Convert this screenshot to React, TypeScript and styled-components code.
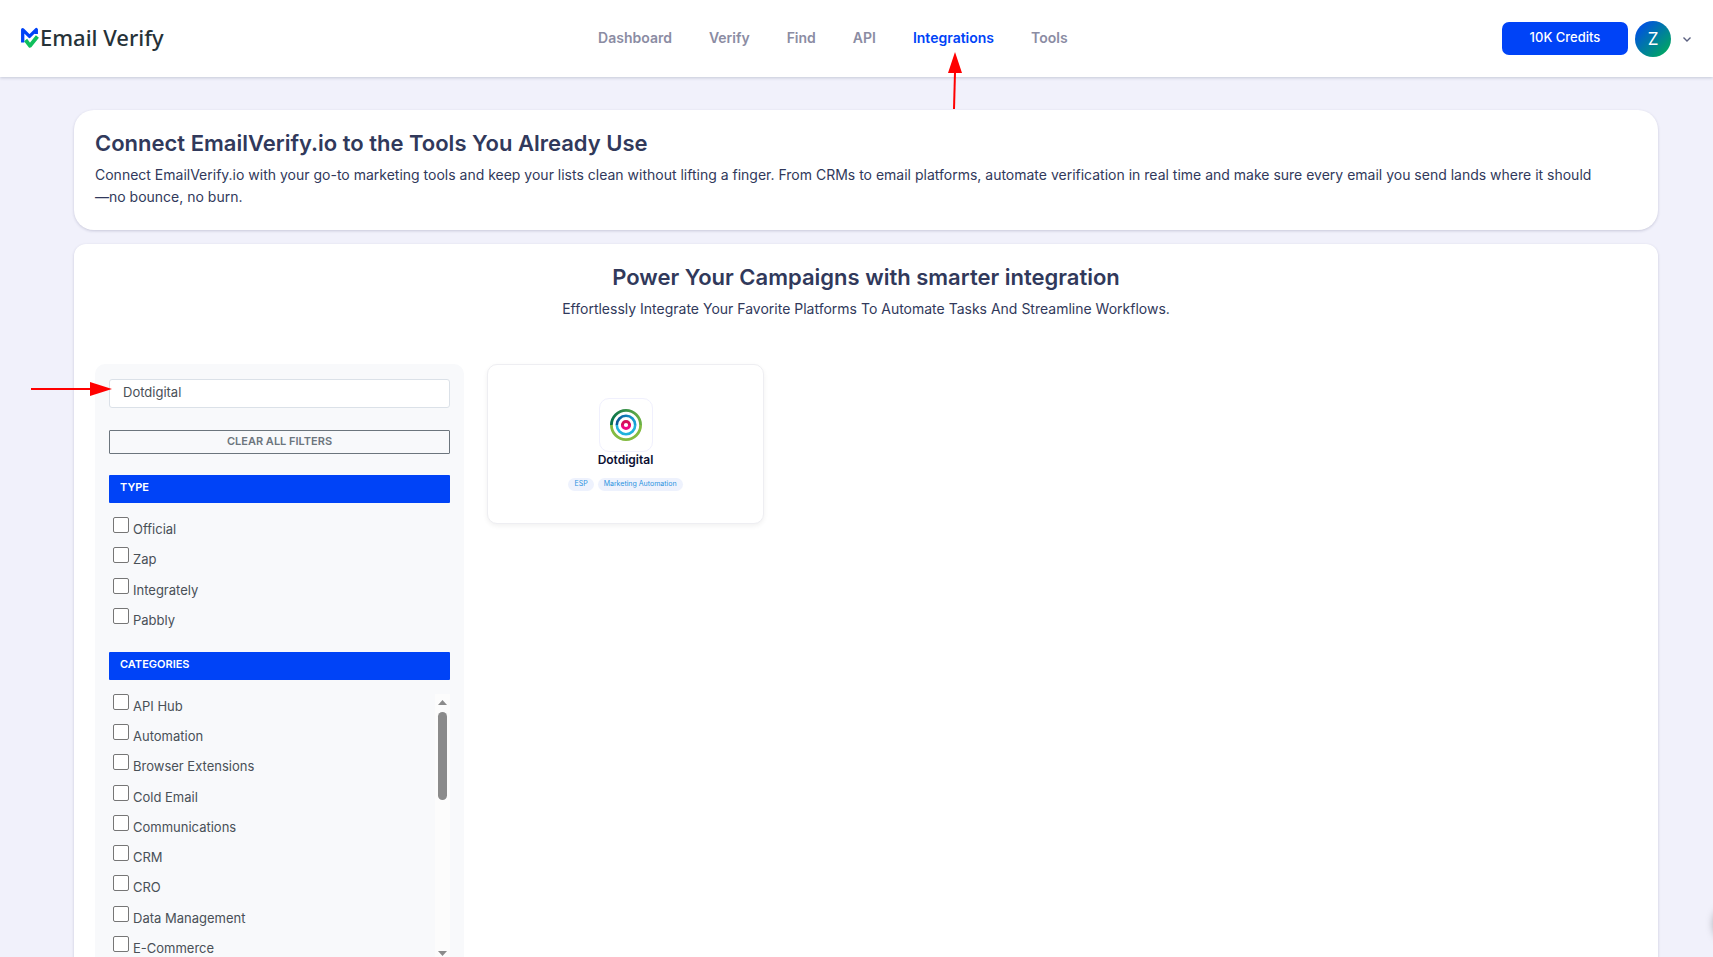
import React, { useState } from "react";
import styled, { createGlobalStyle } from "styled-components";

const GlobalStyle = createGlobalStyle`
  *, *::before, *::after { box-sizing: border-box; }
  body {
    margin: 0;
    background: #f1f1fb;
    font-family: Inter, "Liberation Sans", sans-serif;
    color: #31395b;
  }
  button, input { font-family: inherit; }
  h1, h2, h3, p, ul { margin: 0; padding: 0; }
`;

const Shell = styled.div`
  position: relative;
  display: flex;
  flex-direction: column;
  height: 100vh;
  overflow: hidden;
`;

const Header = styled.header`
  display: flex;
  align-items: center;
  justify-content: space-between;
  flex: none;
  height: 77px;
  padding: 0 20px;
  background: #fff;
  box-shadow: 0 1px 3px rgba(40, 60, 90, 0.22);
  z-index: 1;
`;

const Brand = styled.a`
  display: flex;
  align-items: center;
  gap: 1px;
  padding-bottom: 2px;
  color: #263238;
  text-decoration: none;
`;

const BrandName = styled.span`
  padding-bottom: 2px;
  font-family: "Noto Sans", "Open Sans", sans-serif;
  font-size: 22px;
  font-weight: 500;
  line-height: 28px;
`;

const Nav = styled.nav`
  display: flex;
  gap: 37px;
  padding-bottom: 2px;
`;

const NavLink = styled.a<{ $active?: boolean }>`
  position: relative;
  font-size: 14px;
  font-weight: 600;
  line-height: 20px;
  text-decoration: none;
  color: ${(p) => (p.$active ? "#0043f7" : "#8b8ca3")};
`;

const Account = styled.div`
  display: flex;
  align-items: center;
  gap: 7px;
`;

const CreditsButton = styled.button`
  width: 126px;
  height: 33px;
  padding: 0 0 3px;
  border: 0;
  border-radius: 7px;
  background: #0043f7;
  color: #fff;
  font-size: 13px;
  font-weight: 500;
`;

const ProfileButton = styled.button`
  display: flex;
  align-items: center;
  gap: 10px;
  padding: 0;
  border: 0;
  background: none;
  color: #5b6180;
`;

const Avatar = styled.span`
  display: grid;
  place-items: center;
  width: 36px;
  height: 36px;
  border-radius: 50%;
  background: linear-gradient(135deg, #0043f7, #00b34f);
  color: #fff;
  font-size: 17px;
`;

const Main = styled.main`
  display: flex;
  flex-direction: column;
  flex: 1;
  gap: 14px;
  min-height: 0;
  padding: 33px 55px 0 74px;
  overflow-y: auto;
  scrollbar-width: none;
`;

const Panel = styled.section<{ $radius: number }>`
  flex: none;
  padding: 19px 21px 22px;
  border-radius: ${(p) => p.$radius}px;
  background: #fff;
  box-shadow: 0 1px 3px rgba(40, 40, 90, 0.2);
`;

const Title = styled.h1`
  font-size: 22px;
  font-weight: 600;
  line-height: 28px;
`;

const Lead = styled.p`
  margin-top: 7px;
  font-size: 14px;
  line-height: 22px;
`;

const Intro = styled.div`
  margin-bottom: 44px;
  text-align: center;
`;

const Columns = styled.div`
  display: flex;
  align-items: flex-start;
  gap: 23px;
`;

const Sidebar = styled.aside`
  display: flex;
  flex-direction: column;
  width: 369px;
  padding: 15px 14px;
  border-radius: 10px;
  background: #f8f9fb;
`;

const SearchBox = styled.div`
  position: relative;
`;

const SearchInput = styled.input`
  display: block;
  width: 100%;
  height: 29px;
  padding: 0 13px 3px;
  border: 1px solid #dbe1e8;
  border-radius: 3px;
  background: #fff;
  color: #495057;
  font-size: 13px;
  outline: none;
`;

const ClearButton = styled.button`
  height: 24px;
  margin: 22px 0 21px;
  padding: 0 0 2px;
  border: 1px solid #6c757d;
  border-radius: 1px;
  background: transparent;
  color: #6c757d;
  font-size: 11px;
  font-weight: 600;
`;

const GroupTitle = styled.h3`
  height: 28px;
  padding: 0 11px;
  border-radius: 1px;
  background: #0043f7;
  color: #fff;
  font-size: 11px;
  font-weight: 600;
  line-height: 25px;
`;

const GroupBody = styled.div`
  display: flex;
  margin: 10px 0 18px;
`;

const OptionList = styled.ul<{ $height: number }>`
  display: flex;
  flex-direction: column;
  flex: 1;
  height: ${(p) => p.$height}px;
  padding-left: 4px;
  list-style: none;
`;

const Option = styled.li`
  flex: 1;
`;

const OptionLabel = styled.label`
  display: flex;
  gap: 4px;
  padding-top: 4px;
  color: #495057;
  font-size: 13px;
  line-height: 24px;
`;

const CheckBox = styled.input`
  appearance: none;
  width: 16px;
  height: 16px;
  margin: 0;
  border: 1px solid #767676;
  border-radius: 2px;
  background: #fff;
  &:checked {
    background: #0043f7;
    box-shadow: inset 0 0 0 3px #fff;
  }
`;

const ScrollRail = styled.div`
  display: flex;
  flex-direction: column;
  align-items: center;
  width: 15px;
  height: 268px;
  margin-top: 4px;
  padding: 6px 0;
  background: #fcfcfc;
`;

const ScrollThumb = styled.div`
  width: 9px;
  height: 88px;
  margin: 7px 0 auto;
  border-radius: 5px;
  background: #8b8b8b;
`;

const IntegrationCard = styled.article`
  display: flex;
  flex-direction: column;
  align-items: center;
  width: 277px;
  height: 160px;
  padding-top: 33px;
  border: 1px solid #eeeef2;
  border-radius: 10px;
  background: #fff;
  box-shadow: 0 2px 5px rgba(0, 0, 0, 0.06);
`;

const LogoTile = styled.div`
  display: grid;
  place-items: center;
  width: 54px;
  height: 54px;
  border: 1px solid #f0f0fd;
  border-radius: 10px;
`;

const CardName = styled.h3`
  color: #0b0f33;
  font-size: 12px;
  font-weight: 600;
  line-height: 16px;
`;

const Tags = styled.div`
  display: flex;
  gap: 4px;
  margin-top: 10px;
`;

const Tag = styled.span`
  height: 13px;
  padding: 0 6px;
  border-radius: 7px;
  background: #eef2fd;
  color: #2b93e0;
  font-size: 7px;
  line-height: 11px;
`;

const UpArrow = styled.svg`
  position: absolute;
  top: 24px;
  left: 50%;
  width: 16px;
  height: 58px;
  margin-left: -6px;
  pointer-events: none;
`;

const RightArrow = styled.svg`
  position: absolute;
  top: 3px;
  right: 100%;
  width: 81px;
  height: 14px;
  margin-right: -3px;
  pointer-events: none;
`;

const ChatBubble = styled.div`
  position: absolute;
  right: -41px;
  bottom: 13px;
  width: 40px;
  height: 40px;
  border-radius: 50%;
  background: #fff;
  box-shadow: 0 0 8px rgba(0, 0, 0, 0.35);
`;

const navItems = ["Dashboard", "Verify", "Find", "API", "Integrations", "Tools"];
const types = ["Official", "Zap", "Integrately", "Pabbly"];
const categories = [
  "API Hub",
  "Automation",
  "Browser Extensions",
  "Cold Email",
  "Communications",
  "CRM",
  "CRO",
  "Data Management",
  "E-Commerce",
];

function BrandMark() {
  return (
    <svg width="19" height="24" viewBox="0 0 19 24" fill="none" aria-hidden="true">
      <path
        d="M2.7 16.5V3.6L9.5 10.4 16.3 3.6V8"
        stroke="#0043f7"
        strokeWidth="3.3"
        strokeLinejoin="round"
      />
      <path d="M5.6 14L10 19.8 17.4 10.5" stroke="#0fbf5c" strokeWidth="3.8" strokeLinejoin="round" />
    </svg>
  );
}

function DotdigitalLogo() {
  return (
    <svg width="32" height="32" viewBox="0 0 32 32" fill="none" aria-hidden="true">
      <defs>
        <linearGradient id="ring-green" x1="0" y1="0" x2="1" y2="0">
          <stop offset="0" stopColor="#08724a" />
          <stop offset="1" stopColor="#6ab045" />
        </linearGradient>
        <linearGradient id="ring-blue" x1="0" y1="0" x2="1" y2="0">
          <stop offset="0" stopColor="#0a5796" />
          <stop offset="1" stopColor="#17a0d6" />
        </linearGradient>
      </defs>
      <path d="M1.4 16a14.6 14.6 0 0 0 29.2 0" stroke="#83bb41" strokeWidth="2.8" />
      <path d="M1.4 16a14.6 14.6 0 0 1 29.2 0" stroke="url(#ring-green)" strokeWidth="2.8" />
      <path d="M6.8 16a9.2 9.2 0 0 0 18.4 0" stroke="#1fb2dc" strokeWidth="2.6" />
      <path d="M6.8 16a9.2 9.2 0 0 1 18.4 0" stroke="url(#ring-blue)" strokeWidth="2.6" />
      <path d="M12.4 16a3.6 3.6 0 0 0 7.2 0" stroke="#ec0a80" strokeWidth="3" />
      <path d="M12.4 16a3.6 3.6 0 0 1 7.2 0" stroke="#d6105a" strokeWidth="3" />
    </svg>
  );
}

function Options({ items, height }: { items: string[]; height: number }) {
  return (
    <OptionList $height={height}>
      {items.map((item) => (
        <Option key={item}>
          <OptionLabel>
            <CheckBox type="checkbox" />
            {item}
          </OptionLabel>
        </Option>
      ))}
    </OptionList>
  );
}

export default function App() {
  const [query, setQuery] = useState("Dotdigital");
  return (
    <Shell>
      <GlobalStyle />
      <Header>
        <Brand href="#">
          <BrandMark />
          <BrandName>Email Verify</BrandName>
        </Brand>
        <Nav>
          {navItems.map((item) => (
            <NavLink key={item} href="#" $active={item === "Integrations"}>
              {item}
              {item === "Integrations" && (
                <UpArrow viewBox="0 0 16 58" aria-hidden="true">
                  <path d="M8 20L7 57" stroke="#f00" strokeWidth="2" />
                  <path d="M8 0L15 21H1z" fill="#f00" />
                </UpArrow>
              )}
            </NavLink>
          ))}
        </Nav>
        <Account>
          <CreditsButton type="button">10K Credits</CreditsButton>
          <ProfileButton type="button" aria-label="Account menu">
            <Avatar>Z</Avatar>
            <svg width="12" height="12" viewBox="0 0 12 12" fill="none" aria-hidden="true">
              <path d="M2.5 4.5L6 8 9.5 4.5" stroke="currentColor" strokeWidth="1.4" />
            </svg>
          </ProfileButton>
        </Account>
      </Header>
      <Main>
        <Panel $radius={20}>
          <Title>Connect EmailVerify.io to the Tools You Already Use</Title>
          <Lead>
            Connect EmailVerify.io with your go-to marketing tools and keep your lists clean without lifting a
            finger. From CRMs to email platforms, automate verification in real time and make sure every email you
            send lands where it should
            <br />
            —no bounce, no burn.
          </Lead>
        </Panel>
        <Panel $radius={12}>
          <Intro>
            <Title as="h2">Power Your Campaigns with smarter integration</Title>
            <Lead>Effortlessly Integrate Your Favorite Platforms To Automate Tasks And Streamline Workflows.</Lead>
          </Intro>
          <Columns>
            <Sidebar>
              <SearchBox>
                <SearchInput
                  type="text"
                  aria-label="Search integrations"
                  value={query}
                  onChange={(e) => setQuery(e.target.value)}
                />
                <RightArrow viewBox="0 0 81 14" aria-hidden="true">
                  <path d="M0 7H62" stroke="#f00" strokeWidth="2" />
                  <path d="M81 7L59 14V0z" fill="#f00" />
                </RightArrow>
              </SearchBox>
              <ClearButton type="button" onClick={() => setQuery("")}>
                CLEAR ALL FILTERS
              </ClearButton>
              <GroupTitle>TYPE</GroupTitle>
              <GroupBody>
                <Options items={types} height={121} />
              </GroupBody>
              <GroupTitle>CATEGORIES</GroupTitle>
              <GroupBody>
                <Options items={categories} height={272} />
                <ScrollRail aria-hidden="true">
                  <svg width="9" height="5" viewBox="0 0 9 5">
                    <path d="M0 5L4.5 0 9 5z" fill="#8b8b8b" />
                  </svg>
                  <ScrollThumb />
                  <svg width="9" height="5" viewBox="0 0 9 5">
                    <path d="M0 0L4.5 5 9 0z" fill="#8b8b8b" />
                  </svg>
                </ScrollRail>
              </GroupBody>
            </Sidebar>
            <IntegrationCard>
              <LogoTile>
                <DotdigitalLogo />
              </LogoTile>
              <CardName>Dotdigital</CardName>
              <Tags>
                <Tag>ESP</Tag>
                <Tag>Marketing Automation</Tag>
              </Tags>
            </IntegrationCard>
          </Columns>
        </Panel>
      </Main>
      <ChatBubble />
    </Shell>
  );
}
